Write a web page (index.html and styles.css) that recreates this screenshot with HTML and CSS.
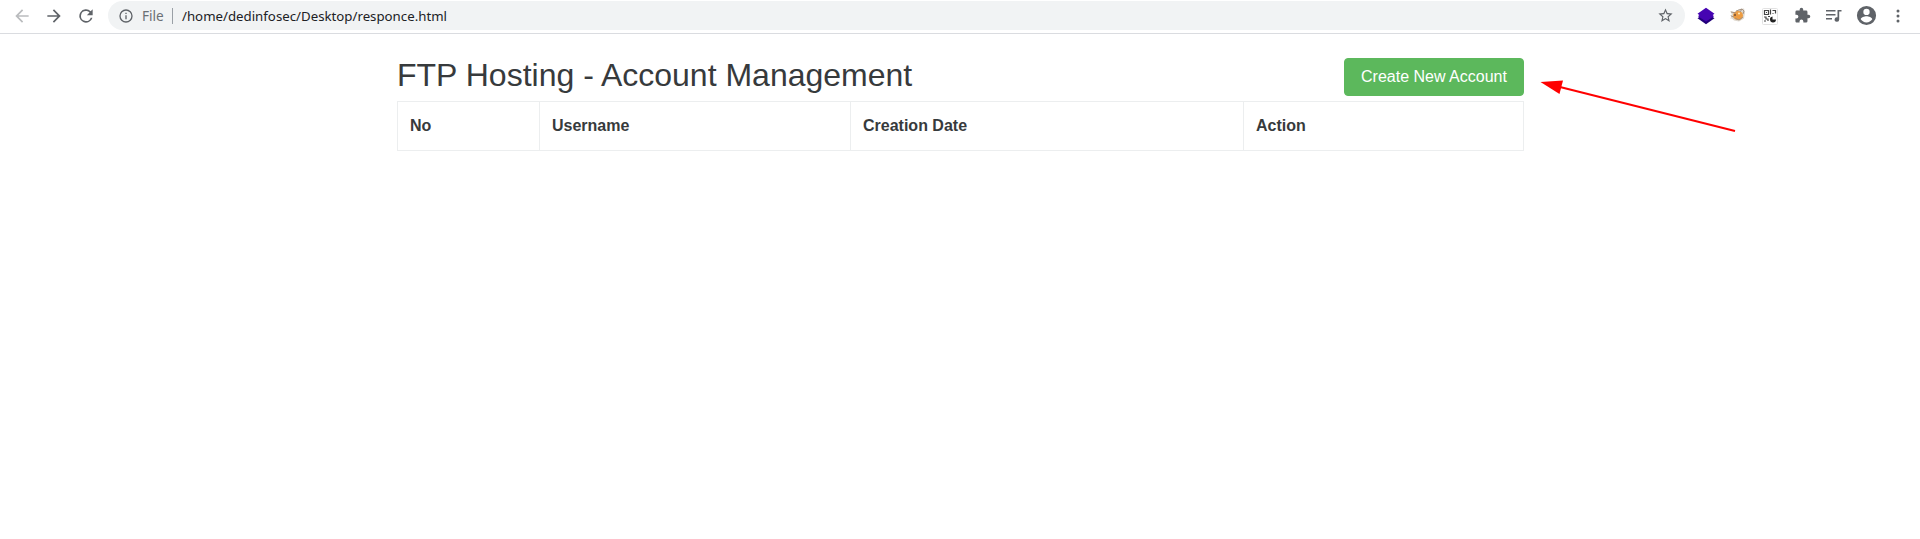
FILE: index.html
```html
<!DOCTYPE html>
<html lang="en">
<head>
<meta charset="utf-8">
<title>FTP Hosting - Account Management</title>
<link rel="stylesheet" href="styles.css">
</head>
<body>
<header class="toolbar">
  <nav class="nav">
    <svg class="icon faded" viewBox="0 0 24 24"><path d="M20 11H7.830l5.590-5.590L12 4l-8 8 8 8 1.410-1.410L7.830 13H20z"/></svg>
    <svg class="icon" viewBox="0 0 24 24"><path d="M12 4l-1.410 1.410L16.170 11H4v2h12.170l-5.580 5.590L12 20l8-8z"/></svg>
    <svg class="icon" viewBox="0 0 24 24"><path d="M17.650 6.350A8 8 0 1 0 19.730 14h-2.080A6 6 0 1 1 12 6c1.660 0 3.140.69 4.220 1.780L13 11h7V4z"/></svg>
  </nav>
  <div class="address">
    <svg class="info" viewBox="0 0 24 24"><path d="M11 7h2v2h-2zm0 4h2v6h-2zm1-9a10 10 0 1 0 0 20 10 10 0 0 0 0-20zm0 18a8 8 0 1 1 0-16 8 8 0 0 1 0 16z"/></svg>
    <span class="scheme">File</span>
    <span class="path">/home/dedinfosec/Desktop/responce.html</span>
    <svg class="star" viewBox="0 0 24 24"><path d="M22 9.240l-7.190-.62L12 2 9.190 8.630 2 9.240l5.460 4.730L5.820 21 12 17.270 18.180 21l-1.630-7.030zM12 15.400l-3.760 2.270 1-4.280-3.320-2.880 4.380-.38L12 6.100l1.710 4.040 4.380.38-3.320 2.880 1 4.280z"/></svg>
  </div>
  <div class="extensions">
    <svg class="ext" viewBox="0 0 18 18"><path fill="#22007a" d="M.5 11.300L3 9.500h12l2.500 1.800L9 17.300z"/><path fill="#4604b2" d="M9 .7l8.500 6L15.700 8l1.300 1.300-8 5.200-8-5.200L2.300 8 .5 6.700z"/></svg>
    <svg class="ext" viewBox="0 0 18 18"><path fill="#ded8ce" d="M1 4l5 1 4-3 5-.5 1 4-1 6-5 3-5-1-2-2H1l2-2-2-1 2-1z"/><ellipse cx="9" cy="8.500" rx="5" ry="4.500" fill="#ed9c42"/><path fill="none" stroke="#a08d7c" stroke-width=".9" d="M2 5l5 1m0-2l6-2-2 3m2-3l2 2-1 3M2 9l3 1m1 1l4 2 4-3"/><circle cx="6" cy="8" r="1" fill="#735039"/><circle cx="10" cy="6.500" r="1" fill="#fff0bf"/></svg>
    <svg class="ext" viewBox="0 0 18 18"><rect x="1.500" y="1.500" width="15" height="16" rx="1" fill="#fff" stroke="#e2e2e2"/><path fill="none" stroke="#444" stroke-width="1.200" d="M3.500 3.500h4v4h-4zm1.500 2h1m3.500-3v5m2-4h3v3m-3 0h1M3 10h2v2h2v2M3 14h2m2-4.500h2"/><path fill="#222" d="M11.500 9.500v3h3.500a3 3 0 1 1-3.500-3z"/></svg>
    <svg class="puzzle" viewBox="0 0 24 24"><path d="M20.500 11H19V7a2 2 0 0 0-2-2h-4V3.500a2.500 2.500 0 0 0-5 0V5H4a2 2 0 0 0-2 2v3.800h1.500a2.700 2.700 0 0 1 0 5.400H2V20c0 1.100.9 2 2 2h3.800v-1.500a2.700 2.700 0 0 1 5.400 0V22H17a2 2 0 0 0 2-2v-4h1.500a2.500 2.500 0 0 0 0-5z"/></svg>
    <svg class="ext" viewBox="0 0 18 18"><path d="M1 3h9.500v1.400H1zm0 4h9.500v1.400H1zm0 4h6v1.400H1zM12.500 3H16.500v1.500h-2.300v8a2.300 2.300 0 1 1-1.700-2.200z"/></svg>
    <svg class="avatar" viewBox="0 0 24 24"><path d="M12 2a10 10 0 1 0 0 20 10 10 0 0 0 0-20zm0 3a3.300 3.300 0 1 1 0 6.600A3.300 3.300 0 0 1 12 5zm0 14.200a7.200 7.200 0 0 1-6-3.220c.03-1.990 4-3.080 6-3.080 1.990 0 5.970 1.090 6 3.080a7.200 7.200 0 0 1-6 3.220z"/></svg>
    <svg class="ext" viewBox="0 0 18 18"><circle cx="9" cy="4" r="1.500"/><circle cx="9" cy="9" r="1.500"/><circle cx="9" cy="14" r="1.500"/></svg>
  </div>
</header>
<main class="container">
  <div class="heading">
    <h2 class="title">FTP Hosting - Account Management</h2>
    <a class="button">Create New Account</a>
  </div>
  <table class="accounts">
    <colgroup><col class="col-no"><col class="col-user"><col class="col-date"><col></colgroup>
    <thead><tr><th>No</th><th>Username</th><th>Creation Date</th><th>Action</th></tr></thead>
  </table>
</main>
<svg class="arrow" viewBox="0 0 200 60"><path d="M20 7L195 51" stroke="#f00" stroke-width="2"/><path d="M.5 2L23 .5 19.500 14z" fill="#f00"/></svg>
</body>
</html>
```
FILE: styles.css
```css
* { box-sizing: border-box; }
body { margin: 0; background: #fff; color: #373a3c; font: 16px/1.5 "Liberation Sans", Arial, sans-serif; overflow: hidden; }
svg { display: block; flex: none; fill: #5f6368; }
.toolbar { display: flex; height: 34px; padding: 1px 6px 3px 12px; border-bottom: 1px solid #dadce0; }
.nav { display: flex; flex: none; align-items: center; gap: 12px; width: 96px; }
.icon { width: 20px; height: 20px; }
.faded { fill: #babcbe; }
.address { display: flex; flex: none; align-items: center; width: 1577px; height: 29px; padding: 0 11px 0 10px; border-radius: 15px; background: #f1f3f4; font: 13.25px/20px "Noto Sans", sans-serif; }
.info { width: 16px; height: 16px; }
.scheme { width: 31px; margin-left: 8px; border-right: 1px solid #9aa0a6; color: #6b7075; font-size: 13.6px; line-height: 16px; }
.path { margin-left: 9px; color: #202124; }
.star { width: 17px; height: 17px; margin-left: auto; }
.extensions { display: grid; grid-template-columns: repeat(7, 32px); place-items: center; margin-left: 5px; height: 29px; }
.ext { width: 18px; height: 18px; }
.puzzle { width: 17px; height: 17px; }
.avatar { width: 23px; height: 23px; }
.container { width: 1127px; margin: 24px 0 0 397px; }
.heading { display: flex; justify-content: space-between; height: 43px; }
.title { margin: 0; font-size: 32px; font-weight: 400; line-height: 35px; }
.button { width: 180px; height: 38px; border: 1px solid #5cb85c; border-radius: 4px; background: #5cb85c; color: #fff; line-height: 36px; text-align: center; }
.accounts { width: 1127px; table-layout: fixed; border-collapse: collapse; }
.accounts th { height: 49px; padding: 12px; border: 1px solid #eceeef; text-align: left; line-height: 24px; }
.col-no { width: 142px; }
.col-user { width: 311px; }
.col-date { width: 393px; }
.arrow { position: absolute; left: 1540px; top: 80px; width: 200px; height: 60px; }
```
